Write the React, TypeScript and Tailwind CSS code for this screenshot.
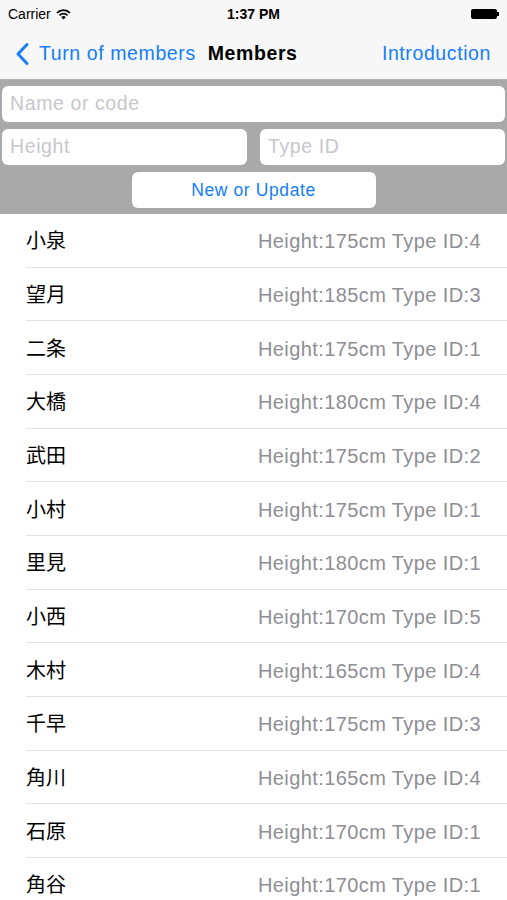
const members = [
  { name: "小泉", height: 175, type: 4 },
  { name: "望月", height: 185, type: 3 },
  { name: "二条", height: 175, type: 1 },
  { name: "大橋", height: 180, type: 4 },
  { name: "武田", height: 175, type: 2 },
  { name: "小村", height: 175, type: 1 },
  { name: "里見", height: 180, type: 1 },
  { name: "小西", height: 170, type: 5 },
  { name: "木村", height: 165, type: 4 },
  { name: "千早", height: 175, type: 3 },
  { name: "角川", height: 165, type: 4 },
  { name: "石原", height: 170, type: 1 },
  { name: "角谷", height: 170, type: 1 },
]

export default function App() {
  return (
    <div
      className="w-[507px] h-[900px] overflow-hidden bg-white"
      style={{ fontFamily: '"Liberation Sans", "Noto Sans CJK JP", sans-serif' }}
    >
      {/* status + nav bar */}
      <div className="bg-[#f7f7f7] border-b border-[#b2b2b2]">
        <div className="h-[28px] flex items-center justify-between px-[8px] text-[14px] text-black">
          <div className="flex items-center gap-[5px] w-[120px]">
            <span>Carrier</span>
            <svg width="15" height="11" viewBox="0 0 15 11">
              <path d="M1 4 A9 9 0 0 1 14 4" stroke="#000" strokeWidth="1.8" fill="none" />
              <path d="M3.5 6.3 A5.5 5.5 0 0 1 11.5 6.3" stroke="#000" strokeWidth="1.8" fill="none" />
              <path d="M7.5 10.5 L5.3 8.3 A3 3 0 0 1 9.7 8.3 Z" fill="#000" />
            </svg>
          </div>
          <span className="font-bold">1:37 PM</span>
          <div className="w-[120px] flex justify-end">
            <div className="flex items-center">
              <div className="w-[26px] h-[10px] bg-black rounded-[2px]" />
              <div className="w-[2px] h-[4px] bg-black" />
            </div>
          </div>
        </div>
        <div className="h-[51px] flex items-center justify-between pl-[15px] pr-[16px] text-[19.5px] tracking-[0.6px]">
          <div className="flex items-center">
            <svg width="15" height="24" viewBox="0 0 15 24" className="mr-[9px]">
              <path d="M12 2.5 L3 12 L12 21.5" stroke="#147efb" strokeWidth="3" fill="none" strokeLinecap="round" strokeLinejoin="round" />
            </svg>
            <span className="text-[#147efb]">Turn of members</span>
            <span className="ml-[12px] font-bold text-black">Members</span>
          </div>
          <span className="text-[#147efb]">Introduction</span>
        </div>
      </div>

      {/* form panel */}
      <div className="bg-[#a9a9a9] px-[2px] pt-[6px] pb-[6px] flex flex-col gap-[7px]">
        <div className="h-[36px] bg-white rounded-[6px] flex items-center px-[8px] text-[19.5px] tracking-[0.6px] text-[#c7c7cd]">
          Name or code
        </div>
        <div className="flex justify-between">
          <div className="w-[245px] h-[36px] bg-white rounded-[6px] flex items-center px-[8px] text-[19.5px] tracking-[0.6px] text-[#c7c7cd]">
            Height
          </div>
          <div className="w-[245px] h-[36px] bg-white rounded-[6px] flex items-center px-[8px] text-[19.5px] tracking-[0.6px] text-[#c7c7cd]">
            Type ID
          </div>
        </div>
        <div className="flex justify-center">
          <div className="w-[244px] h-[36px] bg-white rounded-[6px] flex items-center justify-center text-[17.5px] tracking-[0.6px] text-[#147efb]">
            New or Update
          </div>
        </div>
      </div>

      {/* list */}
      <div className="pl-[26px]">
        {members.map((m, i) => (
          <div
            key={i}
            className="h-[53.67px] flex items-center justify-between pr-[26px] pt-[2px] border-b border-[#e0e0e0]"
          >
            <span className="text-black text-[20px]">{m.name}</span>
            <span className="text-[#8e8e93] text-[20px] tracking-[0.4px]">
              Height:{m.height}cm Type ID:{m.type}
            </span>
          </div>
        ))}
      </div>
    </div>
  )
}
